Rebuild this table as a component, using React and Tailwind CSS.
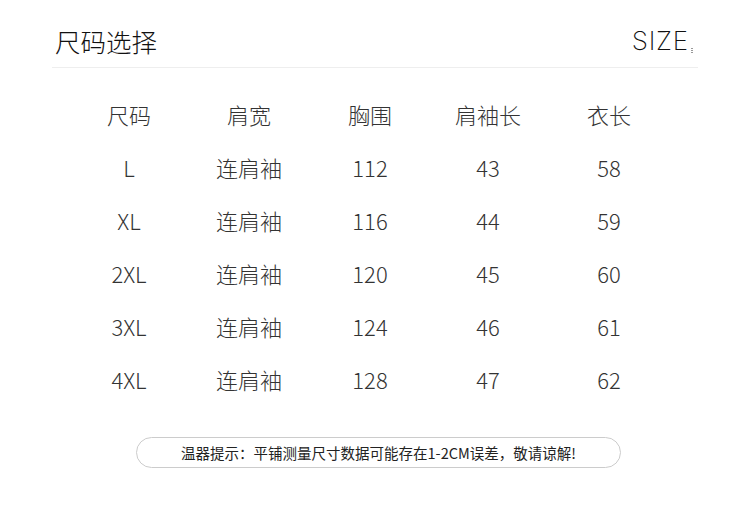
import React from 'react';

const rows = [
  ['L', '连肩袖', '112', '43', '58'],
  ['XL', '连肩袖', '116', '44', '59'],
  ['2XL', '连肩袖', '120', '45', '60'],
  ['3XL', '连肩袖', '124', '46', '61'],
  ['4XL', '连肩袖', '128', '47', '62'],
];

const head = ['尺码', '肩宽', '胸围', '肩袖长', '衣长'];

const App = () => {
  return (
    <div
      className="w-[750px] h-[512px] bg-white text-[#333] overflow-hidden"
      style={{ fontFamily: '"Noto Sans CJK SC", "Noto Sans", sans-serif' }}
    >
      {/* Header */}
      <div className="mx-[52px] pt-[23px] h-[68px] border-b border-[#eeeeee] flex items-start justify-between">
        <h1 className="ml-[3px] text-[25.5px] leading-[36px] font-light text-[#111]">尺码选择</h1>
        <div className="flex items-end mr-[5px] mt-[5px]">
          <span className="ml-[-3px] text-[26px] leading-[26px] font-extralight tracking-[0.8px] text-[#111]" style={{ fontFamily: 'Inter, sans-serif' }}>
            SIZE
          </span>
          <span className="ml-[2px] mb-[1px] flex flex-col gap-[1px]">
            <span className="w-[2px] h-[1px] bg-[#999]" />
            <span className="w-[2px] h-[1px] bg-[#999]" />
            <span className="w-[2px] h-[1px] bg-[#999]" />
          </span>
        </div>
      </div>

      {/* Table */}
      <div className="ml-[69px] mt-[29px] grid grid-cols-[120px_120px_122px_114px_128px] auto-rows-[53px] text-[22px] font-light text-[#333]">
        {head.map((h) => (
          <div key={h} className="flex justify-center leading-[34px]">{h}</div>
        ))}
        {rows.map((r) =>
          r.map((c, i) => (
            <div key={r[0] + i} className="flex justify-center leading-[34px]">{c}</div>
          ))
        )}
      </div>

      {/* Note */}
      <div className="mt-[22px] ml-[136px] w-[485px] h-[31px] rounded-full border border-[#cccccc] flex items-center justify-center text-[14.5px] text-[#222]">
        温器提示：平铺测量尺寸数据可能存在1-2CM误差，敬请谅解!
      </div>
    </div>
  );
};

export default App;
